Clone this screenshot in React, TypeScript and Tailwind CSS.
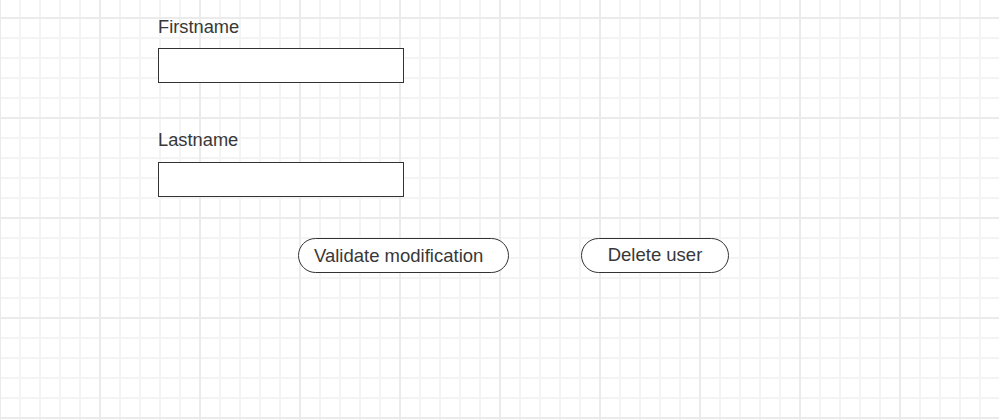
import React from "react";

export default function App() {
  return (
    <div
      className="relative w-[999px] h-[420px] overflow-hidden bg-white bg-[linear-gradient(to_right,#ebebeb_2px,transparent_2px),linear-gradient(to_bottom,#ebebeb_2px,transparent_2px),linear-gradient(to_right,#f4f4f4_2px,transparent_2px),linear-gradient(to_bottom,#f4f4f4_2px,transparent_2px)] bg-[size:100px_100px,100px_100px,20px_20px,20px_20px] bg-[position:-1px_17px,-1px_17px,-1px_17px,-1px_17px]"
      style={{ fontFamily: '"Liberation Sans", Arial, sans-serif' }}
    >
      <div className="flex flex-col items-start pl-[158px] pt-[17px] text-[#383838]">
        <div className="text-[18.3px] leading-[20px]">Firstname</div>
        <div className="mt-[11px] w-[246px] h-[35px] border border-[#333333] bg-white" />
        <div className="mt-[47px] text-[18.3px] leading-[20px]">Lastname</div>
        <div className="mt-[12px] w-[246px] h-[35px] border border-[#333333] bg-white" />
        <div className="mt-[41px] ml-[140px] flex items-center gap-[72px]">
          <div className="w-[211px] h-[35px] rounded-full border border-[#333333] bg-white flex items-center justify-start pl-[15px] text-[18.5px] leading-[20px] pt-[1px]">
            Validate modification
          </div>
          <div className="w-[148px] h-[35px] rounded-full border border-[#333333] bg-white flex items-center justify-center text-[18.5px] leading-[20px] pb-[1px]">
            Delete user
          </div>
        </div>
      </div>
    </div>
  );
}
